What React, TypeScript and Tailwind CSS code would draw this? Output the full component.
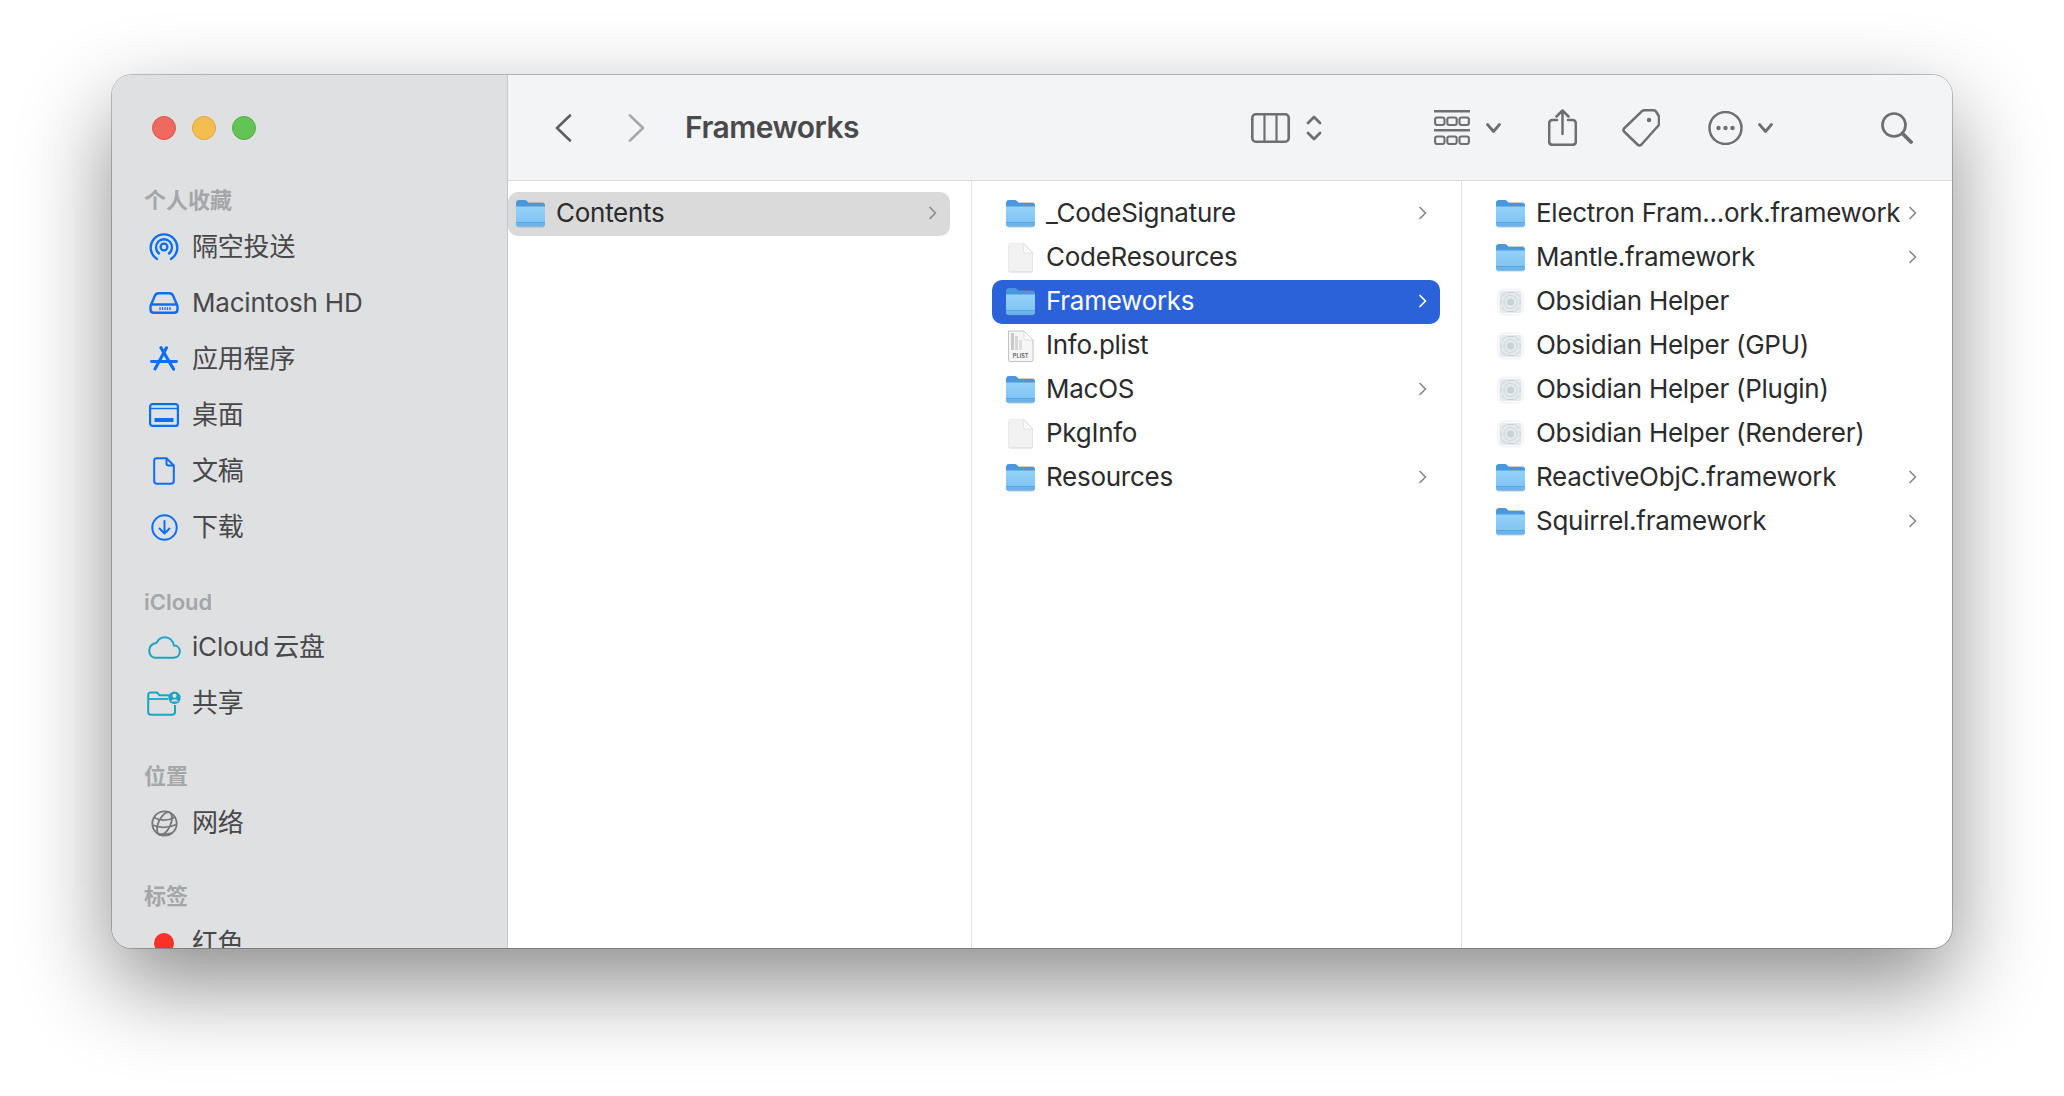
import React from "react";

const latin = "font-['Inter','Noto_Sans_CJK_SC',sans-serif]";

type Kind = "folder" | "doc" | "plist" | "app";
type Entry = { name: string; kind: Kind; chevron?: boolean; selected?: boolean };

const column2: Entry[] = [
  { name: "_CodeSignature", kind: "folder", chevron: true },
  { name: "CodeResources", kind: "doc" },
  { name: "Frameworks", kind: "folder", chevron: true, selected: true },
  { name: "Info.plist", kind: "plist" },
  { name: "MacOS", kind: "folder", chevron: true },
  { name: "PkgInfo", kind: "doc" },
  { name: "Resources", kind: "folder", chevron: true },
];

const column3: Entry[] = [
  { name: "Electron Fram...ork.framework", kind: "folder", chevron: true },
  { name: "Mantle.framework", kind: "folder", chevron: true },
  { name: "Obsidian Helper", kind: "app" },
  { name: "Obsidian Helper (GPU)", kind: "app" },
  { name: "Obsidian Helper (Plugin)", kind: "app" },
  { name: "Obsidian Helper (Renderer)", kind: "app" },
  { name: "ReactiveObjC.framework", kind: "folder", chevron: true },
  { name: "Squirrel.framework", kind: "folder", chevron: true },
];

// ── File icons ──
function FolderIcon() {
  return (
    <svg width="29" height="28" viewBox="0 0 29 28">
      <defs>
        <linearGradient id="folderBody" x1="0" y1="0" x2="0" y2="1">
          <stop offset="0" stopColor="#94d2f8" />
          <stop offset="1" stopColor="#7cc0f2" />
        </linearGradient>
      </defs>
      <rect x="0.5" y="2" width="28" height="25.5" rx="2" fill="#8a8a8a" opacity="0.45" />
      <path d="M0 3 Q0 0 3 0 H9 Q10.5 0 11.5 1.5 L12.5 3 H26.5 Q29 3 29 5.5 V10 H0 Z" fill="#4a98dc" />
      <path d="M0 6.5 H29 V24 Q29 26.5 26.5 26.5 H2.5 Q0 26.5 0 24 Z" fill="url(#folderBody)" />
      <rect x="0" y="22" width="29" height="1" fill="#5aa6e4" />
      <path d="M0 23 H29 V24 Q29 26.5 26.5 26.5 H2.5 Q0 26.5 0 24 Z" fill="#6ab3ec" />
    </svg>
  );
}

function DocIcon() {
  return (
    <svg width="29" height="30" viewBox="0 0 29 30">
      <path d="M2.5 1.5 Q2.5 0.5 3.5 0.5 H18 L27 9.5 V28 Q27 29.5 25.5 29.5 H4 Q2.5 29.5 2.5 28 Z" fill="#d6d6d6" />
      <path d="M3 1 H17.5 L26.5 10 V27.5 Q26.5 28.5 25.5 28.5 H4 Q3 28.5 3 27.5 Z" fill="#f2f2f2" />
      <path d="M17.5 1 V8 Q17.5 10 19.5 10 H26.5 Z" fill="#ffffff" stroke="#d6d6d6" strokeWidth="0.6" />
    </svg>
  );
}

function PlistIcon() {
  return (
    <svg width="29" height="32" viewBox="0 0 29 32">
      <path d="M2.5 1 H18 L27 10 V30 Q27 31.5 25.5 31.5 H4 Q2.5 31.5 2.5 30 Z" fill="#f6f6f6" stroke="#b5b5b5" strokeWidth="0.8" />
      <path d="M18 1 V8 Q18 10 20 10 H27 Z" fill="#ffffff" stroke="#c8c8c8" strokeWidth="0.6" />
      <rect x="5" y="3" width="3" height="17" fill="#c8c8c8" />
      <rect x="9" y="6" width="3" height="14" fill="#d6d6d6" />
      <rect x="13" y="10" width="3" height="10" fill="#dedede" />
      <text x="14.7" y="28" textAnchor="middle" fontSize="5.6" fontWeight="600" fontFamily="Inter, sans-serif" fill="#5f5f5f">PLIST</text>
    </svg>
  );
}

function AppIcon() {
  return (
    <svg width="29" height="28" viewBox="0 0 29 28">
      <rect x="1.5" y="1" width="26" height="26" rx="5.5" fill="#fbfbfb" stroke="#f0f0f0" strokeWidth="0.8" />
      <rect x="3.5" y="3" width="22" height="22" rx="3" fill="#e3e9ec" />
      <circle cx="14.5" cy="14" r="3.6" fill="#c8d3d9" />
      <circle cx="14.5" cy="14" r="6.6" fill="none" stroke="#ccd7dc" strokeWidth="1" />
      <path d="M5.5 8.5 Q9 5 10 4.5 M23.5 8.5 Q20 5 19 4.5 M5.5 19.5 Q9 23 10 23.5 M23.5 19.5 Q20 23 19 23.5 M5 11 V17 M24 11 V17 M11 4.5 H18 M11 23.5 H18" fill="none" stroke="#c8d3d8" strokeWidth="1" />
    </svg>
  );
}

function Chevron({ light }: { light?: boolean }) {
  return (
    <svg width="8" height="14" viewBox="0 0 8 14" fill="none" className="mb-[2px] shrink-0">
      <path d="M1 1.5 L6.5 7 L1 12.5" stroke={light ? "#ffffff" : "#8b8b8b"} strokeWidth="1.7" strokeLinecap="round" strokeLinejoin="round" />
    </svg>
  );
}

function FileRow({ entry, inset = "pl-[14px]" }: { entry: Entry; inset?: string }) {
  const rowBg = entry.selected ? "bg-[#2b62d9] text-white" : "text-[#2b2b2d]";
  return (
    <div className={`flex h-[44px] items-center rounded-[10px] pr-[13px] ${inset} ${rowBg}`}>
      <div className="flex h-[44px] w-[29px] shrink-0 items-center justify-center">
        {entry.kind === "folder" && <FolderIcon />}
        {entry.kind === "doc" && <DocIcon />}
        {entry.kind === "plist" && <PlistIcon />}
        {entry.kind === "app" && <AppIcon />}
      </div>
      <span className="ml-[11px] flex-1 whitespace-nowrap pb-[2px] text-[26px] leading-[42px] tracking-[-0.27px]">{entry.name}</span>
      {entry.chevron && <Chevron light={entry.selected} />}
    </div>
  );
}

// ── Sidebar icons ──
const BLUE = "#0a6ff2";
const CYAN = "#1fa3c2";

function AirDropIcon() {
  return (
    <svg width="30" height="28" viewBox="0 0 30 28" fill="none" stroke={BLUE} strokeWidth="2.3" strokeLinecap="round">
      <path d="M8 26 A13.3 13.3 0 1 1 22 26" />
      <path d="M10 20.5 A8 8 0 1 1 20 20.5" />
      <circle cx="15" cy="14" r="3.4" />
    </svg>
  );
}

function DiskIcon() {
  return (
    <svg width="30" height="22" viewBox="0 0 30 22" fill="none" stroke={BLUE} strokeWidth="2.4" strokeLinejoin="round">
      <path d="M1.5 14 L6 3.5 Q7 1.2 9.5 1.2 H20.5 Q23 1.2 24 3.5 L28.5 14 V17.5 Q28.5 20.8 25 20.8 H5 Q1.5 20.8 1.5 17.5 Z" />
      <path d="M2 12.5 H28" />
      <path d="M11 15.2 V18 M13.5 15.2 V18 M16 15.2 V18 M18.5 15.2 V18 M21 15.2 V18" strokeWidth="1.3" />
    </svg>
  );
}

function AppsIcon() {
  return (
    <svg width="28" height="26" viewBox="0 0 28 26" fill="none" stroke={BLUE} strokeWidth="3.2" strokeLinecap="round">
      <path d="M11 1.8 L23.5 23" />
      <path d="M16.5 1.8 L5 23" strokeWidth="3" />
      <path d="M1.5 15.5 H26.5" strokeWidth="2.8" />
    </svg>
  );
}

function DesktopIcon() {
  return (
    <svg width="30" height="24" viewBox="0 0 30 24" fill="none">
      <rect x="1.1" y="1.1" width="27.8" height="21.8" rx="2.5" stroke={BLUE} strokeWidth="2.2" />
      <path d="M1 5.5 H29" stroke={BLUE} strokeWidth="1.4" />
      <rect x="5.5" y="15" width="19" height="4" fill={BLUE} />
    </svg>
  );
}

function DocumentIcon() {
  return (
    <svg width="22" height="28" viewBox="0 0 22 28" fill="none" stroke={BLUE} strokeWidth="2" strokeLinejoin="round">
      <path d="M3.5 1.2 H13.5 L20.8 8.5 V24 Q20.8 26.8 18 26.8 H4 Q1.2 26.8 1.2 24 V3.5 Q1.2 1.2 3.5 1.2 Z" />
      <path d="M13.5 1.2 V6.5 Q13.5 8.5 15.5 8.5 H20.8" />
    </svg>
  );
}

function DownloadIcon() {
  return (
    <svg width="27" height="27" viewBox="0 0 27 27" fill="none" stroke={BLUE} strokeWidth="2" strokeLinecap="round" strokeLinejoin="round">
      <circle cx="13.5" cy="13.5" r="12.2" />
      <path d="M13.5 7 V19 M8.5 14.5 L13.5 19.5 L18.5 14.5" />
    </svg>
  );
}

function CloudIcon() {
  return (
    <svg width="33" height="23" viewBox="0 0 33 23" fill="none" stroke={CYAN} strokeWidth="2">
      <path d="M7.5 21.8 H25.5 C29.3 21.8 31.8 19 31.8 15.6 C31.8 12 29.2 9.6 26 9.6 C25 4.6 21.3 1.2 16.8 1.2 C13 1.2 10.2 3.4 8.6 6.8 C4.5 7.6 1.2 10.4 1.2 14.8 C1.2 18.8 4 21.8 7.5 21.8 Z" />
    </svg>
  );
}

function SharedIcon() {
  return (
    <svg width="34" height="25" viewBox="0 0 34 25">
      <path d="M22 4.2 H12.5 L10 1.6 H3.8 Q1.2 1.6 1.2 4.2 V21 Q1.2 23.8 4 23.8 H25 Q28 23.8 28 21 V14" fill="none" stroke={CYAN} strokeWidth="2" />
      <path d="M1.5 8 H21" stroke={CYAN} strokeWidth="1.8" />
      <circle cx="27.5" cy="6.8" r="6.2" fill={CYAN} />
      <circle cx="27.5" cy="4.8" r="2.1" fill="#dfe0e2" />
      <path d="M23.5 10.6 Q27.5 5.8 31.5 10.6 Z" fill="#dfe0e2" />
    </svg>
  );
}

function GlobeIcon() {
  return (
    <svg width="27" height="27" viewBox="0 0 27 27" fill="none" stroke="#777779" strokeWidth="1.8">
      <circle cx="13.5" cy="13.5" r="12.2" />
      <ellipse cx="13.5" cy="13.5" rx="6" ry="12.2" transform="rotate(25 13.5 13.5)" />
      <path d="M3 7.5 Q13 13 24.5 7 M1.5 15 Q13 20 25.5 14.5 M6 23.5 Q13 25 21 23" strokeWidth="1.6" />
    </svg>
  );
}

function SectionTitle({ text, className = "" }: { text: string; className?: string }) {
  return (
    <div className={`pl-[32px] text-[22px] font-semibold leading-[34px] text-[#a5a6a8] ${className}`}>{text}</div>
  );
}

function SidebarItem({ icon, label }: { icon: React.ReactNode; label: React.ReactNode }) {
  return (
    <div className="flex h-[56px] items-center pl-[35px]">
      <div className="flex w-[34px] shrink-0 items-center justify-center">{icon}</div>
      <span className="ml-[11px] whitespace-nowrap text-[26px] leading-[56px] tracking-[-0.2px] text-[#48484a]">{label}</span>
    </div>
  );
}

function Sidebar() {
  return (
    <aside className="h-full w-[396px] shrink-0 overflow-hidden border-r border-[#c6c6c8] bg-[#dfe0e2]">
      <div className="flex gap-[16px] pl-[40px] pt-[41px]">
        <span className="h-[24px] w-[24px] rounded-full border border-[#d9574c] bg-[#ee6a5f]" />
        <span className="h-[24px] w-[24px] rounded-full border border-[#dfa53f] bg-[#f5bd4f]" />
        <span className="h-[24px] w-[24px] rounded-full border border-[#52ad46] bg-[#61c454]" />
      </div>
      <SectionTitle text="个人收藏" className="mb-[2px] mt-[43px]" />
      <SidebarItem icon={<AirDropIcon />} label="隔空投送" />
      <SidebarItem icon={<DiskIcon />} label="Macintosh HD" />
      <SidebarItem icon={<AppsIcon />} label="应用程序" />
      <SidebarItem icon={<DesktopIcon />} label="桌面" />
      <SidebarItem icon={<DocumentIcon />} label="文稿" />
      <SidebarItem icon={<DownloadIcon />} label="下载" />
      <SectionTitle text="iCloud" className="mt-[30px]" />
      <SidebarItem icon={<CloudIcon />} label={<>iCloud<span className="ml-[4px]">云盘</span></>} />
      <SidebarItem icon={<SharedIcon />} label="共享" />
      <SectionTitle text="位置" className="mb-[2px] mt-[28px]" />
      <SidebarItem icon={<GlobeIcon />} label="网络" />
      <SectionTitle text="标签" className="mb-[2px] mt-[28px]" />
      <SidebarItem icon={<span className="h-[20px] w-[20px] rounded-full bg-[#fb3029]" />} label="红色" />
    </aside>
  );
}

// ── Toolbar ──
const GREY = "#6f6f71";

function Toolbar() {
  return (
    <header className="flex h-[106px] shrink-0 items-center border-b border-[#d9d9db] bg-[#f3f4f6] pl-[47px] pr-[39px]">
      <svg width="17" height="28" viewBox="0 0 17 28" fill="none">
        <path d="M15 1.5 L2 14 L15 26.5" stroke="#5f5f61" strokeWidth="2.6" strokeLinecap="round" strokeLinejoin="round" />
      </svg>
      <svg width="17" height="28" viewBox="0 0 17 28" fill="none" className="ml-[56px]">
        <path d="M2 1.5 L15 14 L2 26.5" stroke="#a9a9ab" strokeWidth="2.6" strokeLinecap="round" strokeLinejoin="round" />
      </svg>
      <span className="ml-[40px] pb-[2px] text-[30px] font-semibold leading-[40px] tracking-[-0.5px] text-[#4a4a4c]">Frameworks</span>
      <div className="flex-1" />
      <svg width="39" height="30" viewBox="0 0 39 30" fill="none" stroke={GREY} strokeWidth="2.6">
        <rect x="1.3" y="1.3" width="36.4" height="27.4" rx="3.5" />
        <path d="M13.5 1 V29 M25.5 1 V29" strokeWidth="2.2" />
      </svg>
      <svg width="16" height="26" viewBox="0 0 16 26" fill="none" stroke={GREY} strokeWidth="2.8" strokeLinecap="round" strokeLinejoin="round" className="ml-[16px]">
        <path d="M2 8 L8 2 L14 8 M2 18 L8 24 L14 18" />
      </svg>
      <svg width="36" height="35" viewBox="0 0 36 35" fill="none" stroke={GREY} className="ml-[112px]">
        <path d="M0 1.2 H36 M0 20.2 H36" strokeWidth="2.4" />
        <g strokeWidth="2.1">
          <rect x="1.1" y="7.5" width="9.4" height="7.5" rx="2" />
          <rect x="13.3" y="7.5" width="9.4" height="7.5" rx="2" />
          <rect x="25.5" y="7.5" width="9.4" height="7.5" rx="2" />
          <rect x="1.1" y="26.5" width="9.4" height="7.5" rx="2" />
          <rect x="13.3" y="26.5" width="9.4" height="7.5" rx="2" />
          <rect x="25.5" y="26.5" width="9.4" height="7.5" rx="2" />
        </g>
      </svg>
      <svg width="15" height="10" viewBox="0 0 15 10" fill="none" stroke={GREY} strokeWidth="2.8" strokeLinecap="round" strokeLinejoin="round" className="ml-[16px]">
        <path d="M1.5 1.5 L7.5 8.5 L13.5 1.5" />
      </svg>
      <svg width="29" height="37" viewBox="0 0 29 37" fill="none" stroke={GREY} strokeWidth="2.5" strokeLinecap="round" strokeLinejoin="round" className="ml-[47px]">
        <path d="M9 11 H4.5 Q1.2 11 1.2 14.5 V32.5 Q1.2 35.8 4.5 35.8 H24.5 Q27.8 35.8 27.8 32.5 V14.5 Q27.8 11 24.5 11 H20" />
        <path d="M14.5 25 V2 M8.5 7.5 L14.5 1.5 L20.5 7.5" />
      </svg>
      <svg width="38" height="38" viewBox="0 0 38 38" fill="none" className="ml-[45px]">
        <path d="M2 19.5 L20 2.2 Q21 1.2 22.5 1.2 H31.5 Q33 1.2 34 2.5 L36.5 6.5 Q37 7.5 37 9 V14.5 Q37 16 36 17 L19.5 35.5 Q17.5 37.5 15.5 35.5 L2 22.5 Q0.8 21 2 19.5 Z" stroke={GREY} strokeWidth="2.5" strokeLinejoin="round" />
        <circle cx="27" cy="11" r="2.2" fill={GREY} />
      </svg>
      <svg width="35" height="34" viewBox="0 0 35 34" fill="none" className="ml-[48px]">
        <circle cx="17.5" cy="17" r="16" stroke={GREY} strokeWidth="2.5" />
        <circle cx="10.5" cy="17" r="2.2" fill={GREY} />
        <circle cx="17.5" cy="17" r="2.2" fill={GREY} />
        <circle cx="24.5" cy="17" r="2.2" fill={GREY} />
      </svg>
      <svg width="15" height="10" viewBox="0 0 15 10" fill="none" stroke={GREY} strokeWidth="2.8" strokeLinecap="round" strokeLinejoin="round" className="ml-[15px]">
        <path d="M1.5 1.5 L7.5 8.5 L13.5 1.5" />
      </svg>
      <svg width="32" height="32" viewBox="0 0 32 32" fill="none" stroke={GREY} strokeLinecap="round" className="ml-[108px]">
        <circle cx="13" cy="13" r="11.5" strokeWidth="2.7" />
        <path d="M21.5 21.5 L30 30" strokeWidth="3.8" />
      </svg>
    </header>
  );
}

export default function App() {
  return (
    <div className={`h-[1096px] w-[2064px] overflow-hidden bg-white pl-[112px] pt-[75px] ${latin}`}>
      <div className="flex h-[873px] w-[1840px] overflow-hidden rounded-[20px] bg-white shadow-[0_36px_90px_rgba(0,0,0,0.46),0_0_0_1px_rgba(0,0,0,0.22)]">
        <Sidebar />
        <main className="flex min-w-0 flex-1 flex-col">
          <Toolbar />
          <div className="flex min-h-0 flex-1">
            <section className="w-[464px] shrink-0 border-r border-[#e2e2e2] pr-[21px] pt-[11px]">
              <div className="flex h-[44px] items-center rounded-[10px] bg-[#dadada] pl-[8px] pr-[13px] text-[#2b2b2d]">
                <div className="flex w-[29px] shrink-0 items-center justify-center">
                  <FolderIcon />
                </div>
                <span className="ml-[11px] flex-1 pb-[2px] text-[26px] leading-[42px] tracking-[-0.27px]">Contents</span>
                <Chevron />
              </div>
            </section>
            <section className="w-[490px] shrink-0 border-r border-[#e2e2e2] pl-[20px] pr-[21px] pt-[11px]">
              {column2.map(entry => (
                <FileRow key={entry.name} entry={entry} />
              ))}
            </section>
            <section className="min-w-0 flex-1 pl-[20px] pr-[22px] pt-[11px]">
              {column3.map(entry => (
                <FileRow key={entry.name} entry={entry} />
              ))}
            </section>
          </div>
        </main>
      </div>
    </div>
  );
}
